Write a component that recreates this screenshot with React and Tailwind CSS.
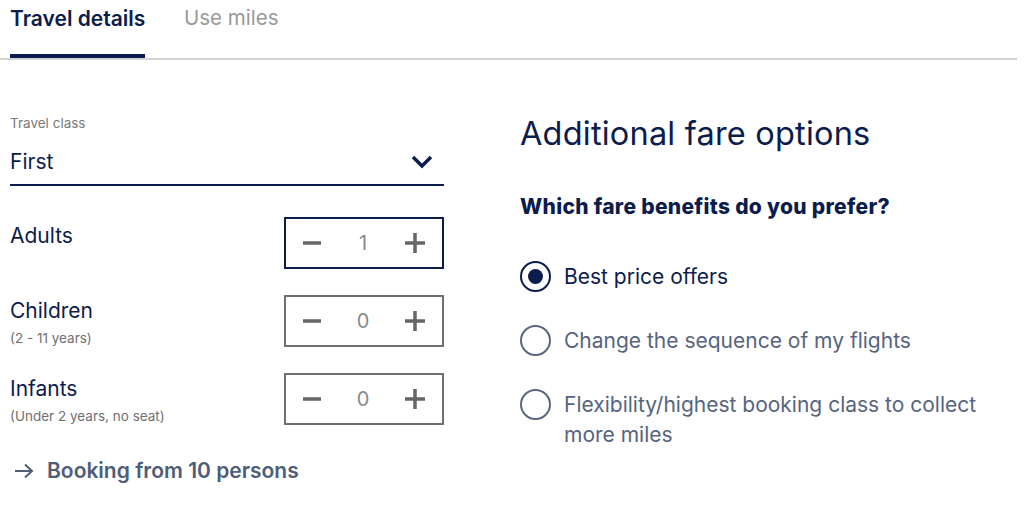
import React, { useState } from "react";

const font = { fontFamily: "Inter, 'Open Sans', sans-serif" };

const Minus = () => (
  <svg width="20" height="20" viewBox="0 0 20 20">
    <path d="M1 10h18" stroke="#666" strokeWidth="3.5" />
  </svg>
);

const Plus = () => (
  <svg width="22" height="22" viewBox="0 0 22 22">
    <path d="M1 11h20M11 1v20" stroke="#666" strokeWidth="3.5" />
  </svg>
);

const Stepper = ({ value, active }) => (
  <div
    className={`w-[160px] h-[52px] border-2 flex items-center justify-between px-[16px] ${
      active ? "border-[#0c1c4c]" : "border-[#707070]"
    }`}
  >
    <Minus />
    <span className="text-[20px] text-[#8a8a8a]">{value}</span>
    <Plus />
  </div>
);

const Radio = ({ checked, children }) => (
  <div className="flex items-start gap-[13px]">
    <div
      className={`w-[31px] h-[31px] shrink-0 rounded-full border-[2.5px] flex items-center justify-center ${
        checked ? "border-[#0c1c4c]" : "border-[#5a6680]"
      }`}
    >
      {checked && <div className="w-[15px] h-[15px] rounded-full bg-[#0c1c4c]" />}
    </div>
    <div
      className={`text-[21px] leading-[30px] pt-[1px] ${
        checked ? "text-[#0c1c4c]" : "text-[#56647e]"
      }`}
    >
      {children}
    </div>
  </div>
);

export default function App() {
  const [tab] = useState("travel");
  const rows = [
    { label: "Adults", value: 1, active: true },
    { label: "Children", sub: "(2 - 11 years)", value: 0 },
    { label: "Infants", sub: "(Under 2 years, no seat)", value: 0 },
  ];

  return (
    <div className="w-[1024px] h-[506px] bg-white overflow-hidden" style={font}>
      {/* tabs */}
      <div className="flex border-b-2 border-[#d4d4d4] mr-[7px] h-[60px]">
        <div className="ml-[10px] w-[135px] h-full flex flex-col justify-between">
          <div className="text-[21px] font-semibold text-[#0c1c4c] pt-[3px] whitespace-nowrap">
            Travel details
          </div>
          <div className={`h-[4px] ${tab === "travel" ? "bg-[#0c1c4c]" : ""}`} />
        </div>
        <div className="ml-[39px] text-[20.5px] text-[#999] pt-[3px]">Use miles</div>
      </div>

      <div className="flex">
        {/* left column */}
        <div className="ml-[10px] w-[434px]">
          <div className="text-[13.5px] text-[#7a7a7a] mt-[53px]">Travel class</div>
          <div className="flex items-center justify-between h-[53px] pt-[6px] border-b-2 border-[#0c1c4c]">
            <span className="text-[21px] text-[#0c1c4c]">First</span>
            <svg width="22" height="14" viewBox="0 0 22 14" className="mr-[11px]">
              <path d="M2 2l9 9 9-9" stroke="#0c1c4c" strokeWidth="3.5" fill="none" />
            </svg>
          </div>

          <div className="mt-[31px] flex flex-col gap-[26px]">
            {rows.map((r) => (
              <div key={r.label} className="flex justify-between items-start h-[52px]">
                <div className={r.sub ? "pt-[3px]" : "pt-[6px]"}>
                  <div className="text-[21px] leading-[26px] text-[#0c1c4c]">{r.label}</div>
                  {r.sub && (
                    <div className="text-[13.5px] text-[#707070] mt-[4px]">{r.sub}</div>
                  )}
                </div>
                <Stepper value={r.value} active={r.active} />
              </div>
            ))}
          </div>

          <div className="mt-[30px] flex items-center gap-[13px] ml-[4px] text-[#4e5d78]">
            <svg width="20" height="16" viewBox="0 0 20 16">
              <path d="M1 8h17M11 1.5l7 6.5-7 6.5" stroke="#4e5d78" strokeWidth="2" fill="none" />
            </svg>
            <span className="text-[21px] font-semibold">Booking from 10 persons</span>
          </div>
        </div>

        {/* right column */}
        <div className="ml-[76px] flex-1">
          <div className="text-[32.5px] text-[#0c1c4c] mt-[54px] leading-[40px] tracking-[0.2px]">
            Additional fare options
          </div>
          <div className="text-[21px] font-extrabold text-[#0c1c4c] mt-[37px] tracking-[0.3px]">
            Which fare benefits do you prefer?
          </div>
          <div className="mt-[38px] flex flex-col gap-[33px] w-[470px]">
            <Radio checked>Best price offers</Radio>
            <Radio>Change the sequence of my flights</Radio>
            <Radio>Flexibility/highest booking class to collect more miles</Radio>
          </div>
        </div>
      </div>
    </div>
  );
}
